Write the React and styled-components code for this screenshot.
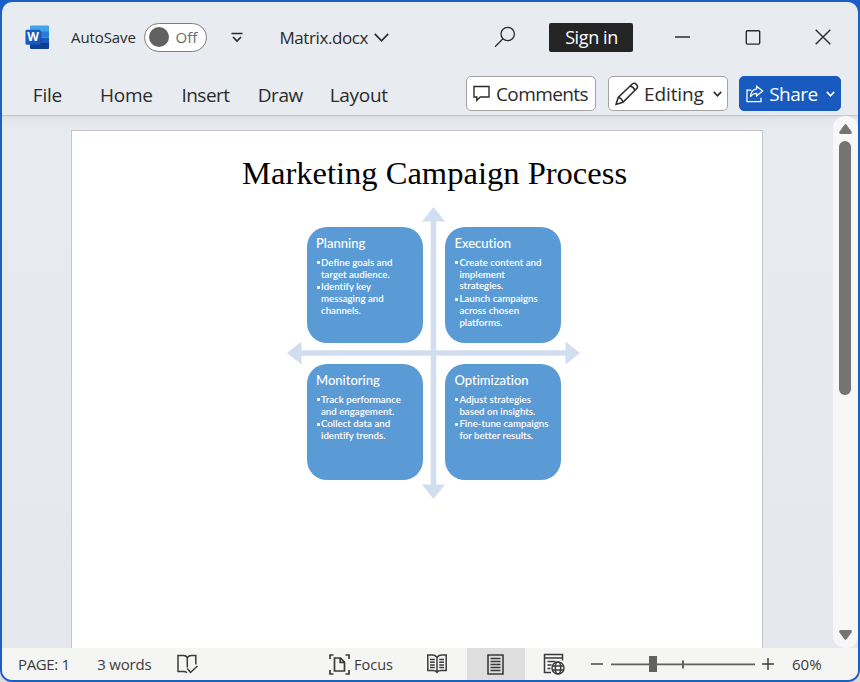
import React from "react";
import styled, { createGlobalStyle } from "styled-components";

const Global = createGlobalStyle`
  * { box-sizing: border-box; }
  body { margin: 0; background: #dcdcdc; overflow: hidden; }
  button { font: inherit; color: inherit; border: 0; background: none; padding: 0; margin: 0; text-align: left; }
  h1, h2, ul { margin: 0; padding: 0; font-weight: 400; }
  svg { display: block; flex: none; }
`;

const Frame = styled.div`
  width: 860px;
  height: 682px;
  padding: 2px;
  background: #1b5fc6;
  border-radius: 0 0 12px 12px;
  font-family: "Open Sans", "Noto Sans", sans-serif;
  color: #2b2b2b;
`;

const Window = styled.div`
  display: flex;
  flex-direction: column;
  height: 678px;
  overflow: hidden;
  border-radius: 10px;
  background: #e8ebf0;
`;

const TitleBar = styled.header`
  display: grid;
  grid-template-columns: 46px 73px 87px 48.4px 94.6px 120.5px 55px 126px 70px 69.5px 1fr;
  align-items: center;
  height: 70px;
  padding-left: 23px;
`;

const Label = styled.span`
  font-size: ${(p) => p.$size || 15}px;
  letter-spacing: ${(p) => p.$track || 0}px;
  white-space: nowrap;
`;

const Toggle = styled.button`
  display: flex;
  align-items: center;
  gap: 6.5px;
  width: 63px;
  height: 29px;
  padding-left: 4px;
  border: 1px solid #7d7d7d;
  border-radius: 15px;
  background: #fff;
  color: #6a6a6a;
`;

const Knob = styled.span`
  width: 20px;
  height: 20px;
  border-radius: 50%;
  background: #616161;
`;

const SignIn = styled.button`
  display: flex;
  align-items: center;
  justify-content: center;
  width: 84px;
  height: 29px;
  border-radius: 2px;
  background: #242424;
  color: #fff;
`;

const RibbonBar = styled.nav`
  display: grid;
  grid-template-columns: 67.3px 81.3px 76.3px 72px 136.3px 142px 131px 102px;
  height: 44px;
  padding: 4px 0 0 30.8px;
  border-bottom: 1px solid #c6c8cb;
`;

const Tab = styled.button`
  height: 37px;
  font-size: 19px;
  letter-spacing: ${(p) => p.$track || 0}px;
`;

const RibbonButton = styled.button`
  display: flex;
  align-items: center;
  width: ${(p) => p.$width}px;
  height: 35px;
  padding-left: 6px;
  border: 1px solid ${(p) => (p.$primary ? "#185abd" : "#a3a3a3")};
  border-radius: 5px;
  background: ${(p) => (p.$primary ? "#185abd" : "#fff")};
  color: ${(p) => (p.$primary ? "#fff" : "#2b2b2b")};
`;

const ButtonText = styled.span`
  width: ${(p) => p.$width}px;
  margin-left: ${(p) => p.$gap}px;
  font-size: 19px;
  letter-spacing: ${(p) => p.$track}px;
  white-space: nowrap;
`;

const Workspace = styled.main`
  display: flex;
  justify-content: space-between;
  height: 532px;
  padding-left: 69px;
  background: linear-gradient(#d9dbdf 0, #e4e7eb 3px, #e7eaee 14px, #e5e8ed 100%);
`;

const Page = styled.article`
  width: 692px;
  margin-top: 14px;
  padding-top: 25px;
  border: 1px solid #c4c6ca;
  border-bottom: 0;
  background: #fff;
`;

const Heading = styled.h1`
  height: 35px;
  padding-left: 170px;
  font: 32.55px/35px "Liberation Serif", serif;
  color: #000;
  white-space: nowrap;
`;

const Matrix = styled.section`
  position: relative;
  width: 293px;
  height: 292px;
  margin: 16px 0 0 215px;
  padding: 20px;
`;

const Arrows = styled.svg`
  position: absolute;
  inset: 0;
`;

const Quadrants = styled.div`
  position: relative;
  display: grid;
  grid-template-columns: 116px 116px;
  grid-auto-rows: 116px;
  gap: 21px 22.4px;
`;

const Card = styled.div`
  padding: 7.5px 0 0 9px;
  border-radius: 20px;
  background: #5b9bd5;
  color: #fff;
  font-family: Lato, "Open Sans", sans-serif;
  font-variant-ligatures: none;
  white-space: nowrap;
`;

const CardTitle = styled.h2`
  height: 22.3px;
  font-size: 13px;
  font-weight: 500;
  line-height: 16px;
`;

const Points = styled.ul`
  list-style: none;
  font-size: 9.7px;
  font-weight: 600;
  line-height: 11.8px;
`;

const Point = styled.li`
  display: grid;
  grid-template-columns: 5px auto;
  margin-bottom: 0.9px;

  &::before {
    content: "";
    width: 3px;
    height: 3px;
    margin: 4.5px 0 0 1px;
    border-radius: 1px;
    background: #fff;
  }
`;

const Lines = styled.span`
  white-space: pre-line;
`;

const ScrollTrack = styled.aside`
  display: flex;
  flex-direction: column;
  align-items: center;
  width: 25px;
  padding: 7.5px 1px 8px 0;
  border-radius: 12px;
  background: #f7f7f7;
`;

const ScrollThumb = styled.div`
  width: 12px;
  height: 254px;
  margin: 7.5px 0 auto;
  border-radius: 6px;
  background: #747474;
`;

const StatusBar = styled.footer`
  display: grid;
  grid-template-columns: 79.3px 79.7px 152px 25px 73px 40px 58px 18.5px 47.5px 20px 151px 30px 1fr;
  align-items: center;
  height: 32px;
  padding-left: 16px;
  background: #f5f5f4;
  color: #3b3b3b;
`;

const SelectedView = styled.button`
  display: grid;
  place-items: center;
  width: 58px;
  height: 32px;
  background: #dedede;
`;

const Icon = ({ w, h, sw = 1.4, children }) => (
  <svg width={w} height={h} viewBox={`0 0 ${w} ${h}`} fill="none" stroke="currentColor" strokeWidth={sw}>
    {children}
  </svg>
);

const WordLogo = () => (
  <svg width="25" height="25" viewBox="0 0 25 25">
    <path d="M6 .5h17q1 0 1 1v5.500H5V1.500q0-1 1-1z" fill="#41a5ee" />
    <path d="M5 6.500h19v6H5z" fill="#2b7cd3" />
    <path d="M5 12.500h19v6H5z" fill="#185abd" />
    <path d="M5 18h19v5q0 1-1 1H6q-1 0-1-1z" fill="#103f91" />
    <path d="M5 6h10q1.600 0 1.600 1.600V18q0 2-2 2H5z" fill="#0b3070" opacity=".4" />
    <rect x=".5" y="4.700" width="15" height="15" rx="1.300" fill="#185abd" />
    <text x="8" y="16.400" textAnchor="middle" fontFamily="Open Sans, sans-serif" fontWeight="700" fontSize="12" fill="#fff">
      W
    </text>
  </svg>
);

const Chevron = ({ w, h, sw }) => (
  <Icon w={w} h={h} sw={sw}>
    <path d={`M.8 .9L${w / 2} ${h - 1.2}L${w - 0.8} .9`} />
  </Icon>
);

const CommentIcon = () => (
  <Icon w={18} h={18}>
    <path d="M1 1.500h15v10.500H7.300l-3.500 3.300V12H1z" />
  </Icon>
);

const PencilIcon = () => (
  <Icon w={24} h={24} sw={1.500}>
    <path d="M1 22.500l2.200-7L17.500 1.800q1.800-1.300 3.800.6t.7 3.900L7.900 20.300zM3.200 15.500q3.700.6 4.700 4.800M15.200 4q3.700.9 4.700 4.500" />
  </Icon>
);

const ShareIcon = () => (
  <Icon w={18} h={18} sw={1.300}>
    <path d="M5.500 5.200H1v11.500h14v-4M10.600 1.200l6 4.900-6 4.800V8.300q-4 0-6.200 3.600.4-7.100 6.200-8z" />
  </Icon>
);

const ProofIcon = () => (
  <Icon w={22} h={20} sw={1.500}>
    <path d="M10.300 13.500V3.500Q9 1.500 6.500 1.500H1V17.500h5.500q2.300 0 3.500 1.200M10.300 3.500Q12 1.500 14.500 1.500h4.300v9M10.300 14.500l3.200 4 7-6.500" />
  </Icon>
);

const FocusIcon = () => (
  <Icon w={21} h={21} sw={1.700}>
    <path d="M4.500 1H1v4M16.500 1H20v4M4.500 20H1v-4M16.500 20H20v-4M5.500 4h6l4 4v9h-10zM11.200 4v4.300h4.300" />
  </Icon>
);

const ReadIcon = () => (
  <Icon w={20} h={20} sw={1.500}>
    <path d="M10 3.200Q8 1 5.500 1H.8v15.500h5q3 0 4.200 1.700 1.200-1.700 4.200-1.700h5V1h-4.700Q12 1 10 3.200V19" />
    <path d="M3 5.500h4.800M3 8.200h4.800M3 10.900h4.800M3 13.600h4.800M12.200 5.500H17M12.200 8.200H17M12.200 10.900H17M12.200 13.600H17" />
  </Icon>
);

const PrintIcon = () => (
  <Icon w={17} h={21} sw={1.600}>
    <path d="M1 1h15v19H1zM3.500 4.500h10M3.500 7.500h10M3.500 10.500h10M3.500 13.500h10M3.500 16.500h10" />
  </Icon>
);

const WebIcon = () => (
  <Icon w={22} h={22} sw={1.500}>
    <path d="M8 19.500H1.500V1.500h18v6M1.500 5h18M4.500 8.500h8M4.500 12h4M4.500 15.500h3" />
    <circle cx="15" cy="15" r="6" />
    <ellipse cx="15" cy="15" rx="2.700" ry="6" />
    <path d="M9.500 13h11M9.500 17h11" />
  </Icon>
);

const ZoomSlider = () => (
  <svg width="144" height="18" viewBox="0 0 144 18" fill="#616161">
    <path d="M0 8.500h144v1.700H0zM71 5.500h2v8h-2zM38 1h8v16h-8z" />
  </svg>
);

const quadrants = [
  { title: "Planning", points: ["Define goals and\ntarget audience.", "Identify key\nmessaging and\nchannels."] },
  { title: "Execution", points: ["Create content and\nimplement\nstrategies.", "Launch campaigns\nacross chosen\nplatforms."] },
  { title: "Monitoring", points: ["Track performance\nand engagement.", "Collect data and\nidentify trends."] },
  { title: "Optimization", points: ["Adjust strategies\nbased on insights.", "Fine-tune campaigns\nfor better results."] },
];

export default function App() {
  return (
    <Frame>
      <Global />
      <Window>
        <TitleBar>
          <WordLogo />
          <Label $track={-0.1}>AutoSave</Label>
          <Toggle>
            <Knob />
            <Label>Off</Label>
          </Toggle>
          <Icon w={12} h={11} sw={1.700}>
            <path d="M.5 1.500h11M2 5l4 4 4-4" />
          </Icon>
          <Label $size={17} $track={-0.4}>Matrix.docx</Label>
          <Chevron w={15} h={9} sw={1.600} />
          <Icon w={22} h={22} sw={1.300}>
            <circle cx="13.700" cy="8" r="6.700" />
            <path d="M9 12.800L1 20.800" />
          </Icon>
          <SignIn>
            <Label $size={18} $track={-0.4}>Sign in</Label>
          </SignIn>
          <Icon w={15} h={3}>
            <path d="M0 1h15" />
          </Icon>
          <Icon w={16} h={15}>
            <rect x="1.300" y=".7" width="13.400" height="13.400" rx="1" />
          </Icon>
          <Icon w={16} h={16}>
            <path d="M.7 .7l14.600 14.600M15.300 .7L.7 15.300" />
          </Icon>
        </TitleBar>

        <RibbonBar>
          <Tab $track={-0.2}>File</Tab>
          <Tab $track={-0.3}>Home</Tab>
          <Tab $track={-0.5}>Insert</Tab>
          <Tab $track={-0.4}>Draw</Tab>
          <Tab $track={-0.3}>Layout</Tab>
          <RibbonButton $width={130.5}>
            <CommentIcon />
            <ButtonText $gap={5} $width={93} $track={-0.6}>Comments</ButtonText>
          </RibbonButton>
          <RibbonButton $width={120}>
            <PencilIcon />
            <ButtonText $gap={5} $width={69} $track={-0.1}>Editing</ButtonText>
            <Chevron w={9} h={6} sw={1.600} />
          </RibbonButton>
          <RibbonButton $width={102} $primary>
            <ShareIcon />
            <ButtonText $gap={5.200} $width={57} $track={-0.5}>Share</ButtonText>
            <Chevron w={9} h={6} sw={1.600} />
          </RibbonButton>
        </RibbonBar>

        <Workspace>
          <Page>
            <Heading>Marketing Campaign Process</Heading>
            <Matrix>
              <Arrows width="293" height="292" viewBox="0 0 293 293" preserveAspectRatio="none" fill="#d2deef">
                <path d="M146.500 0l11.500 14.500h-8.700v264h8.700L146.500 293l-11.500-14.500h8.700v-264H135z" />
                <path d="M0 146.500L14.500 135v8.700h264V135l14.500 11.500-14.500 11.500v-8.700h-264v8.700z" />
              </Arrows>
              <Quadrants>
                {quadrants.map((q) => (
                  <Card key={q.title}>
                    <CardTitle>{q.title}</CardTitle>
                    <Points>
                      {q.points.map((text) => (
                        <Point key={text}>
                          <Lines>{text}</Lines>
                        </Point>
                      ))}
                    </Points>
                  </Card>
                ))}
              </Quadrants>
            </Matrix>
          </Page>
          <ScrollTrack>
            <svg width="13" height="10" viewBox="0 0 13 10" fill="#747474">
              <path d="M5.600 .5q.9-.9 1.800 0l5.200 7.300q.7 2-1 2.200H1.400q-1.700-.2-1-2.200z" />
            </svg>
            <ScrollThumb />
            <svg width="13" height="10" viewBox="0 0 13 10" fill="#747474">
              <path d="M5.600 9.500q.9.900 1.800 0l5.200-7.300q.7-2-1-2.200H1.400q-1.700.2-1 2.200z" />
            </svg>
          </ScrollTrack>
        </Workspace>

        <StatusBar>
          <Label $track={-0.35}>PAGE: 1</Label>
          <Label $track={-0.2}>3 words</Label>
          <ProofIcon />
          <FocusIcon />
          <Label $size={14.500}>Focus</Label>
          <ReadIcon />
          <SelectedView>
            <PrintIcon />
          </SelectedView>
          <span />
          <WebIcon />
          <Icon w={12} h={2}>
            <path d="M0 1h12" />
          </Icon>
          <ZoomSlider />
          <Icon w={12} h={12}>
            <path d="M0 6h12M6 0v12" />
          </Icon>
          <Label>60%</Label>
        </StatusBar>
      </Window>
    </Frame>
  );
}
